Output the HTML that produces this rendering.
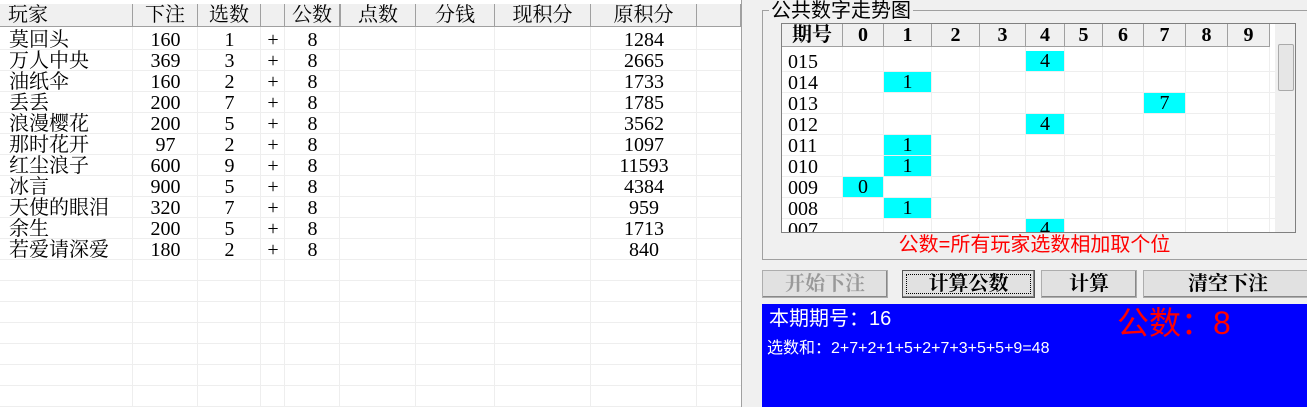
<!DOCTYPE html><html><head><meta charset="utf-8"><style>
body{margin:0;width:1307px;height:407px;background:#f0f0f0;position:relative;overflow:hidden;font-family:"Liberation Serif","Noto Serif CJK SC",serif;color:#000}
.a{position:absolute}
#lt{left:0;top:0;width:741px;height:407px;background:#fff;border-right:1px solid #a0a0a0}
.h{position:absolute;top:4px;height:23px;background:#f0f0f0;border-right:1px solid #a0a0a0;border-bottom:1px solid #a0a0a0;font-size:20px;line-height:22px;text-align:center;box-sizing:border-box}
.vl{position:absolute;top:27px;bottom:0;width:1px;background:#eee}
.hl{position:absolute;left:0;width:741px;height:1px;background:#eee}
.c{position:absolute;font-size:20px;line-height:21px;text-align:center}
.gh{position:absolute;top:0;height:23px;background:#f0f0f0;border-right:1px solid #a0a0a0;border-bottom:1px solid #a0a0a0;font-size:20px;font-weight:bold;line-height:23px;text-align:center;box-sizing:border-box}
.cy{position:absolute;background:#0ff;height:20px;font-size:20px;line-height:21px;text-align:center}
.btn{position:absolute;top:270px;height:28px;background:#e1e1e1;border:1px solid #adadad;box-sizing:border-box;font-size:20px;line-height:26px;text-align:center;font-weight:bold;box-shadow:inset -1px -1px #888}
</style></head><body>
<div class="a" id="lt">
<div class="h" style="left:0;width:133px;text-align:left;padding-left:8px">玩家</div>
<div class="h" style="left:133px;width:65px">下注</div>
<div class="h" style="left:198px;width:63px">选数</div>
<div class="h" style="left:261px;width:24px"></div>
<div class="h" style="left:285px;width:55px">公数</div>
<div class="h" style="left:340px;width:76px;border-left:1px solid #a0a0a0">点数</div>
<div class="h" style="left:416px;width:79px">分钱</div>
<div class="h" style="left:495px;width:96px">现积分</div>
<div class="h" style="left:591px;width:106px">原积分</div>
<div class="h" style="left:697px;width:44px"></div>
<div class="vl" style="left:132px"></div><div class="vl" style="left:197px"></div><div class="vl" style="left:260px"></div><div class="vl" style="left:284px"></div><div class="vl" style="left:339px"></div><div class="vl" style="left:415px"></div><div class="vl" style="left:494px"></div><div class="vl" style="left:590px"></div><div class="vl" style="left:696px"></div>
<div id="rows"></div>
</div>
<div class="a" style="left:762px;top:10px;width:560px;height:250px;border:1px solid #a0a0a0;box-sizing:border-box"></div>
<div class="a" style="left:769px;top:1px;background:#f0f0f0;font-size:20px;line-height:20px;padding:0 2px;font-family:'Liberation Sans','Noto Sans CJK SC',sans-serif">公共数字走势图</div>
<div class="a" style="left:781px;top:23px;width:515px;height:210px;background:#fff;border:1px solid #808080;overflow:hidden;box-sizing:border-box">
<div id="g"></div>
<div class="a" style="left:493px;top:0;width:20px;height:210px;background:#f0f0f0"></div>
<div class="a" style="left:496px;top:20px;width:14px;height:45px;background:#e6e6e6;border:1px solid #aaa;border-radius:2px"></div>
</div>
<div class="a" style="left:762px;top:234px;width:545px;text-align:center;color:#f00;font-size:20px;font-family:'Liberation Sans','Noto Sans CJK SC',sans-serif;line-height:22px">公数=所有玩家选数相加取个位</div>
<div class="btn" style="left:762px;width:126px;color:#999">开始下注</div>
<div class="btn" style="left:902px;width:133px;outline:1px dotted #000;outline-offset:-5px;border-color:#555">计算公数</div>
<div class="btn" style="left:1041px;width:96px">计算</div>
<div class="btn" style="left:1143px;width:170px">清空下注</div>
<div class="a" style="left:762px;top:304px;width:545px;height:103px;background:#00f;font-family:'Liberation Sans','Noto Sans CJK SC',sans-serif;color:#fff">
<div class="a" style="left:7px;top:2px;font-size:20px;line-height:26px">本期期号：16</div>
<div class="a" style="left:355px;top:0;font-size:32px;line-height:38px;color:#f00">公数：8</div>
<div class="a" style="left:5px;top:35px;font-size:16px;line-height:20px">选数和：2+7+2+1+5+2+7+3+5+5+9=48</div>
</div>
<script>
var d=[["莫回头",160,1,1284],["万人中央",369,3,2665],["油纸伞",160,2,1733],["丢丢",200,7,1785],["浪漫樱花",200,5,3562],["那时花开",97,2,1097],["红尘浪子",600,9,11593],["冰言",900,5,4384],["天使的眼泪",320,7,959],["余生",200,5,1713],["若爱请深爱",180,2,840]];
var h="";
for(var i=0;i<18;i++){h+='<div class="hl" style="top:'+(49+i*21)+'px"></div>';}
d.forEach(function(r,i){var t=30+i*21;
h+='<div class="c" style="left:9px;top:'+t+'px;text-align:left">'+r[0]+'</div>';
h+='<div class="c" style="left:133px;width:65px;top:'+t+'px">'+r[1]+'</div>';
h+='<div class="c" style="left:198px;width:63px;top:'+t+'px">'+r[2]+'</div>';
h+='<div class="c" style="left:261px;width:24px;top:'+t+'px">+</div>';
h+='<div class="c" style="left:285px;width:55px;top:'+t+'px">8</div>';
h+='<div class="c" style="left:591px;width:106px;top:'+t+'px">'+r[3]+'</div>';});
document.getElementById("rows").innerHTML=h;
var cx=[0,61,102,150,198,244,283,321,362,404,446,488];
var lab=["期号","0","1","2","3","4","5","6","7","8","9",""];
var g="";
for(var k=0;k<11;k++){g+='<div class="gh" style="left:'+cx[k]+'px;width:'+(cx[k+1]-cx[k])+'px">'+lab[k]+'</div>';
g+='<div class="a" style="left:'+(cx[k+1]-1)+'px;top:23px;width:1px;height:190px;background:#eee"></div>';}
var rw=[["015",4],["014",1],["013",7],["012",4],["011",1],["010",1],["009",0],["008",1],["007",4]];
rw.forEach(function(r,i){var t=27+i*21;
g+='<div class="a" style="left:0;width:493px;top:'+(t+20)+'px;height:1px;background:#eee"></div>';
g+='<div class="c" style="left:6px;top:'+(t+1)+'px;text-align:left">'+r[0]+'</div>';
var c=r[1]+1;g+='<div class="cy" style="left:'+cx[c]+'px;width:'+(cx[c+1]-cx[c]-1)+'px;top:'+t+'px">'+r[1]+'</div>';});
document.getElementById("g").innerHTML=g;
</script>
</body></html>
